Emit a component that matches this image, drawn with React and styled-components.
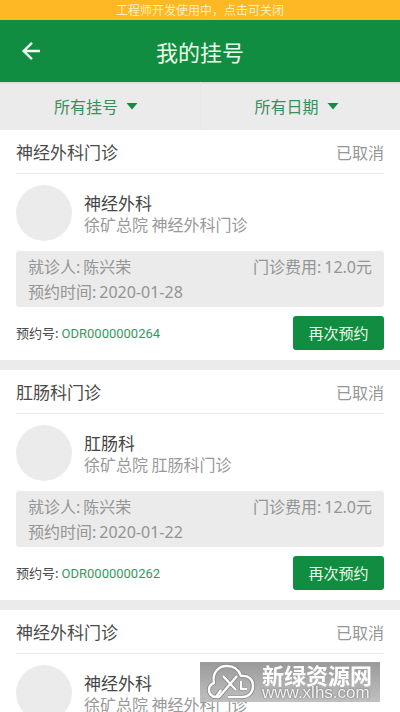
import React from "react";
import styled, { createGlobalStyle } from "styled-components";

const GREEN = "#118d41";

const GlobalStyle = createGlobalStyle`
  * { box-sizing: border-box; }
  body {
    margin: 0;
    background: #fff;
    color: #4a4a4a;
    font-family: "Noto Sans CJK SC", sans-serif;
  }
  button { font: inherit; border: 0; cursor: pointer; }
  h1, h2, h3, p, dl, dd { margin: 0; font-weight: 400; }
`;

const Page = styled.div`
  position: relative;
  display: flex;
  flex-direction: column;
  height: 100vh;
  overflow: hidden;
`;

const DevBanner = styled.button`
  flex: none;
  height: 20px;
  padding: 0;
  background: #fdb823;
  color: #fff0c4;
  font-size: 12px;
  line-height: 20px;
`;

const TopBar = styled.header`
  flex: none;
  display: grid;
  grid-template-columns: 64px 1fr 64px;
  align-items: center;
  height: 62px;
  background: ${GREEN};
`;

const BackButton = styled.button`
  display: flex;
  width: 62px;
  padding: 12px 20px;
  background: none;
  color: #f2fff2;
`;

const Title = styled.h1`
  font-size: 22px;
  line-height: 32px;
  text-align: center;
  color: #eaffea;
`;

const Filters = styled.nav`
  flex: none;
  display: grid;
  grid-template-columns: 1fr 1fr;
  height: 48px;
  background: #ebebeb;
  box-shadow: inset 0 2px 2px -1px #cfd6d0;
`;

const FilterButton = styled.button`
  display: flex;
  align-items: center;
  justify-content: center;
  gap: 8px;
  padding: 0 8px 0 0;
  background: none;
  color: #36905a;
  font-size: 16px;

  & + & { border-left: 1px solid #e7e7e7; }
`;

const List = styled.main`
  flex: 1;
  min-height: 0;
  display: flex;
  flex-direction: column;
  gap: 10px;
  overflow-y: auto;
  scrollbar-width: none;
  background: #ebebeb;
`;

const Card = styled.article`
  flex: ${(p) => (p.$last ? "1 0 auto" : "none")};
  padding: 0 16px 10px;
  background: #fff;
`;

const CardHeader = styled.header`
  display: flex;
  align-items: center;
  justify-content: space-between;
  height: 44px;
  border-bottom: 1px solid #ebebeb;
`;

const Clinic = styled.h2`
  font-size: 17px;
  line-height: 24px;
`;

const Status = styled.span`
  font-size: 16px;
  line-height: 24px;
  color: #969696;
`;

const Doctor = styled.div`
  display: flex;
  align-items: center;
  gap: 12px;
  padding: 11px 0 10px;
`;

const Avatar = styled.div`
  width: 56px;
  height: 56px;
  border-radius: 50%;
  background: #ebebeb;
`;

const Department = styled.h3`
  font-size: 17px;
  line-height: 22px;
  color: #444;
`;

const Hospital = styled.p`
  font-size: 16px;
  line-height: 20px;
  color: #999;
`;

const Details = styled.dl`
  display: flex;
  flex-wrap: wrap;
  justify-content: space-between;
  padding: 4px 12px 2px;
  border-radius: 3px;
  background: #ebebeb;
  color: #949494;
  font-family: "Noto Sans", "Noto Sans CJK SC", sans-serif;
  font-size: 16px;
  line-height: 25px;
`;

const Detail = styled.div`
  display: flex;
  gap: 3px;
`;

const CardFooter = styled.footer`
  display: flex;
  align-items: center;
  justify-content: space-between;
  margin-top: 9px;
`;

const OrderNo = styled.p`
  font-size: 13px;
  line-height: 20px;
`;

const Code = styled.span`
  font-family: Roboto, sans-serif;
  color: #2f9b5f;
`;

const RebookButton = styled.button`
  width: 91px;
  height: 34px;
  padding: 0;
  border-radius: 3px;
  background: ${GREEN};
  color: #eaffea;
  font-size: 15px;
  line-height: 34px;
`;

const Watermark = styled.aside`
  position: absolute;
  right: 20px;
  bottom: 10px;
  display: flex;
  align-items: center;
  gap: 7px;
  width: 180px;
  height: 40px;
  padding-left: 7px;
  background: linear-gradient(rgba(145, 145, 145, 0.92), rgba(185, 185, 185, 0.9));
  color: #fff;
`;

const SiteName = styled.div`
  font-size: 22px;
  font-weight: 700;
  line-height: 22px;
`;

const SiteUrl = styled.div`
  font-family: "Liberation Sans", sans-serif;
  font-size: 17px;
  line-height: 16px;
  color: #f4f4f4;
  text-shadow: 0 0 2px #555;
`;

const appointments = [
  { id: 1, dept: "神经外科", patient: "陈兴荣", fee: "12.0元", date: "2020-01-28", order: "ODR0000000264" },
  { id: 2, dept: "肛肠科", patient: "陈兴荣", fee: "12.0元", date: "2020-01-22", order: "ODR0000000262" },
  { id: 3, dept: "神经外科" },
];

function BackIcon() {
  return (
    <svg width="22" height="20" viewBox="0 0 22 20" fill="none" stroke="currentColor" strokeWidth="2.4" aria-hidden="true">
      <path d="M20 10H4M12 1.8 3.6 10l8.4 8.2" />
    </svg>
  );
}

function CaretIcon() {
  return (
    <svg width="12" height="7" viewBox="0 0 12 7" fill="#118d41" aria-hidden="true">
      <path d="M0.5 0h11L6 6.5z" />
    </svg>
  );
}

const CLOUD =
  "M14 26 9 33C4 33 2 29 2 26c0-3 2-6 5-7C5 9 11 2 20 2c7 0 12 4 14 10 7-1 12 3 12 10 0 7-5 11-11 11H21M9 33h3L30 12M16 12l13 14M34 17v8h6";

function CloudLogo() {
  return (
    <svg width="48" height="36" viewBox="0 0 48 36" fill="none" strokeLinejoin="round" aria-hidden="true">
      <path d={CLOUD} stroke="#858585" strokeWidth="4" />
      <path d={CLOUD} stroke="#fff" strokeWidth="2.4" />
    </svg>
  );
}

function AppointmentCard({ item, last }) {
  return (
    <Card $last={last}>
      <CardHeader>
        <Clinic>{item.dept}门诊</Clinic>
        <Status>已取消</Status>
      </CardHeader>
      <Doctor>
        <Avatar />
        <div>
          <Department>{item.dept}</Department>
          <Hospital>徐矿总院 {item.dept}门诊</Hospital>
        </div>
      </Doctor>
      {item.order && (
        <>
          <Details>
            <Detail><dt>就诊人:</dt><dd>{item.patient}</dd></Detail>
            <Detail><dt>门诊费用:</dt><dd>{item.fee}</dd></Detail>
            <Detail><dt>预约时间:</dt><dd>{item.date}</dd></Detail>
          </Details>
          <CardFooter>
            <OrderNo>预约号: <Code>{item.order}</Code></OrderNo>
            <RebookButton type="button">再次预约</RebookButton>
          </CardFooter>
        </>
      )}
    </Card>
  );
}

export default function App() {
  return (
    <Page>
      <GlobalStyle />
      <DevBanner type="button">工程师开发使用中，点击可关闭</DevBanner>
      <TopBar>
        <BackButton type="button" aria-label="返回"><BackIcon /></BackButton>
        <Title>我的挂号</Title>
      </TopBar>
      <Filters>
        <FilterButton type="button">所有挂号<CaretIcon /></FilterButton>
        <FilterButton type="button">所有日期<CaretIcon /></FilterButton>
      </Filters>
      <List>
        {appointments.map((item, i) => (
          <AppointmentCard key={item.id} item={item} last={i === appointments.length - 1} />
        ))}
      </List>
      <Watermark>
        <CloudLogo />
        <div>
          <SiteName>新绿资源网</SiteName>
          <SiteUrl>www.xlhs.com</SiteUrl>
        </div>
      </Watermark>
    </Page>
  );
}
